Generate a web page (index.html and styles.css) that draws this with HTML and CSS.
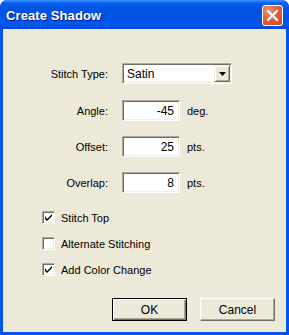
FILE: index.html
```html
<!DOCTYPE html>
<html>
<head>
<meta charset="utf-8">
<link rel="stylesheet" href="styles.css">
</head>
<body>
<div class="window">
  <div class="titlebar">
    <span class="title">Create Shadow</span>
    <span class="close" aria-label="Close">
      <svg width="13" height="13" viewBox="0 0 13 13"><path d="M2 2 L11 11 M11 2 L2 11" stroke="#fff" stroke-width="2.2" stroke-linecap="square"/></svg>
    </span>
  </div>
  <div class="content">
    <div class="field first">
      <span class="label">Stitch Type:</span>
      <div class="combo">
        <span class="combo-text">Satin</span>
        <span class="drop"><svg width="7" height="4" viewBox="0 0 7 4"><path d="M0 0 H7 L3.5 4 Z" fill="#000"/></svg></span>
      </div>
    </div>
    <div class="field">
      <span class="label">Angle:</span>
      <div class="textbox">-45</div>
      <span class="unit">deg.</span>
    </div>
    <div class="field">
      <span class="label">Offset:</span>
      <div class="textbox">25</div>
      <span class="unit">pts.</span>
    </div>
    <div class="field">
      <span class="label">Overlap:</span>
      <div class="textbox">8</div>
      <span class="unit">pts.</span>
    </div>
    <div class="checks">
      <div class="check"><span class="box checked"><svg width="7" height="7" viewBox="0 0 7 7"><path d="M0 2 V5 L2 7 L7 2 V0 L2 5 Z" fill="#000"/></svg></span><span>Stitch Top</span></div>
      <div class="check"><span class="box"></span><span>Alternate Stitching</span></div>
      <div class="check"><span class="box checked"><svg width="7" height="7" viewBox="0 0 7 7"><path d="M0 2 V5 L2 7 L7 2 V0 L2 5 Z" fill="#000"/></svg></span><span>Add Color Change</span></div>
    </div>
    <div class="buttons">
      <div class="btn default"><span>OK</span></div>
      <div class="btn"><span>Cancel</span></div>
    </div>
  </div>
</div>
</body>
</html>
```
FILE: styles.css
```css
html, body {
  margin: 0;
  padding: 0;
  background: #ffffff;
}
.window {
  width: 289px;
  height: 335px;
  display: flex;
  flex-direction: column;
  font-family: "Liberation Sans", Arial, sans-serif;
  font-size: 11px;
  color: #000;
  background: #0055ea;
  border-radius: 7px 7px 0 0;
  overflow: hidden;
}
.titlebar {
  height: 29px;
  flex: 0 0 29px;
  display: flex;
  align-items: center;
  padding-left: 6px;
  padding-right: 6px;
  background: linear-gradient(180deg, #3d95ff 0px, #0a5fef 3px, #0054e3 8px, #0052e6 16px, #0058ee 24px, #0050de 27px, #0046d0 29px);
}
.title {
  color: #fff;
  font-family: "Liberation Sans", Arial, sans-serif;
  font-weight: bold;
  font-size: 13px;
  letter-spacing: 0.1px;
  text-shadow: 1px 1px 0 #0a1e8c;
  padding-top: 1px;
}
.close {
  margin-left: auto;
  width: 19px;
  height: 19px;
  border: 1px solid #fff;
  border-radius: 3px;
  background: radial-gradient(circle at 30% 25%, #f0907a 0, #e2603f 45%, #cf4419 100%);
  display: flex;
  align-items: center;
  justify-content: center;
  margin-top: 1px;
}
.content {
  flex: 1;
  background: #ece9d8;
  margin: 0 3px 3px 3px;
  display: flex;
  flex-direction: column;
}
.field {
  display: flex;
  align-items: center;
  height: 21px;
  margin-top: 15px;
}
.field.first {
  margin-top: 34px;
  margin-bottom: 1px;
}
.label {
  width: 105px;
  text-align: right;
  margin-right: 14px;
  white-space: nowrap;
}
.combo {
  width: 110px;
  height: 21px;
  box-sizing: border-box;
  border: 1px solid;
  border-color: #aca899 #fff #fff #aca899;
  box-shadow: inset 1px 1px 0 #716f64, inset -1px -1px 0 #f1efe2;
  background: #fff;
  display: flex;
  align-items: center;
  padding: 1px;
}
.combo-text {
  flex: 1;
  padding-left: 3px;
  font-size: 12px;
}
.drop {
  width: 16px;
  height: 17px;
  box-sizing: border-box;
  background: #ece9d8;
  border: 1px solid;
  border-color: #f1efe2 #716f64 #716f64 #f1efe2;
  box-shadow: inset 1px 1px 0 #fff, inset -1px -1px 0 #aca899;
  display: flex;
  align-items: center;
  justify-content: center;
}
.textbox {
  width: 58px;
  height: 21px;
  box-sizing: border-box;
  border: 1px solid;
  border-color: #aca899 #fff #fff #aca899;
  box-shadow: inset 1px 1px 0 #716f64, inset -1px -1px 0 #f1efe2;
  background: #fff;
  text-align: right;
  padding: 3px 5px 0 3px;
  font-size: 12px;
  line-height: 14px;
}
.unit {
  margin-left: 7px;
}
.checks {
  display: flex;
  flex-direction: column;
  gap: 13px;
  margin-top: 18px;
  padding-left: 39px;
}
.check {
  display: flex;
  align-items: center;
  height: 13px;
  gap: 6px;
}
.box {
  width: 13px;
  height: 13px;
  box-sizing: border-box;
  border: 1px solid;
  border-color: #aca899 #fff #fff #aca899;
  box-shadow: inset 1px 1px 0 #716f64, inset -1px -1px 0 #f1efe2;
  background: #fff;
  display: flex;
  align-items: center;
  justify-content: center;
}
.buttons {
  display: flex;
  justify-content: flex-end;
  gap: 13px;
  margin-top: auto;
  padding-right: 11px;
  padding-bottom: 11px;
}
.btn {
  width: 75px;
  height: 23px;
  box-sizing: border-box;
  background: #ece9d8;
  border: 1px solid;
  border-color: #fff #716f64 #716f64 #fff;
  box-shadow: inset -1px -1px 0 #aca899, inset 1px 1px 0 #f1efe2;
  display: flex;
  align-items: center;
  justify-content: center;
  font-size: 12px;
}
.btn.default {
  border: 1px solid #000;
  box-shadow: inset 1px 1px 0 #fff, inset -1px -1px 0 #716f64, inset -2px -2px 0 #aca899;
}
```
